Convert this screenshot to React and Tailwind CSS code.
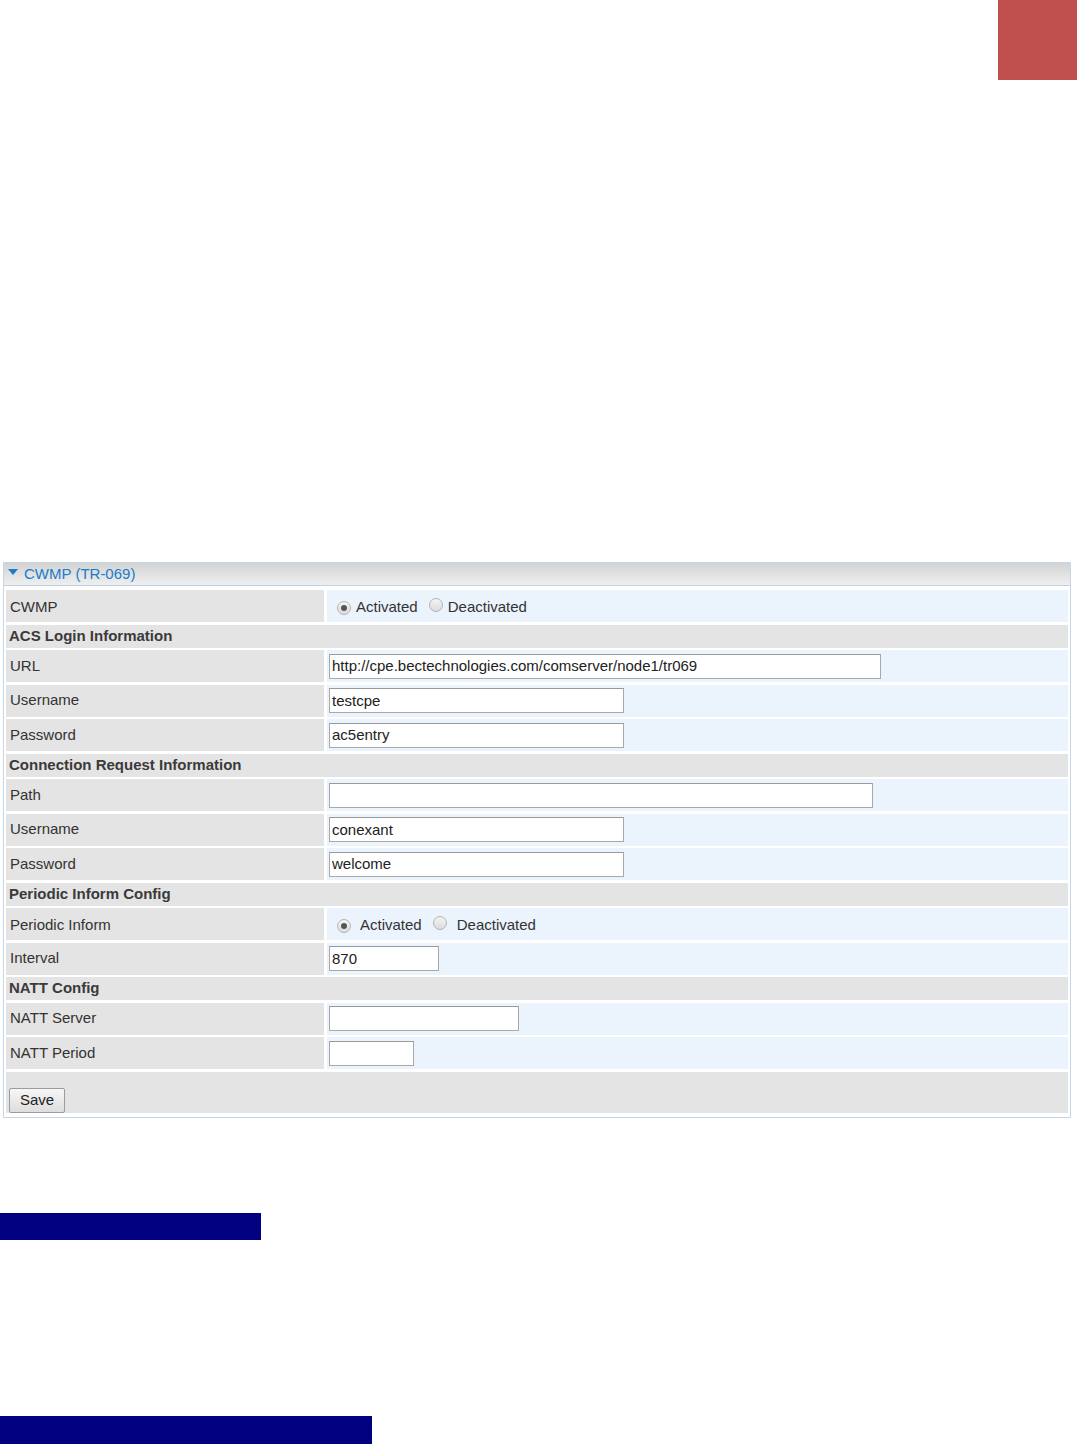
import React from "react";

const font = { fontFamily: '"Liberation Sans", Arial, sans-serif' };

function Radio({ checked }) {
  return (
    <span className="inline-flex items-center justify-center w-[14px] h-[14px] rounded-full border border-[#b4b4b4] bg-gradient-to-b from-[#f4f4f4] to-[#dcdcdc] shrink-0">
      {checked ? <span className="w-[6px] h-[6px] rounded-full bg-[#555]" /> : null}
    </span>
  );
}

function TextInput({ value, w }) {
  return (
    <div
      className={`h-[25px] bg-white border border-[#a9a9a9] border-t-[#9a9a9a] flex items-center pl-[2px] pt-[1px] text-[15px] text-[#222] ${w}`}
    >
      {value}
    </div>
  );
}

function DataRow({ label, children, top }) {
  return (
    <div className="flex h-[32px] gap-[3px]">
      <div className={`w-[318px] shrink-0 bg-[#e4e4e4] flex ${top ? "items-start pt-[6px]" : "items-center"} pl-[4px] text-[15px] text-[#333]`}>
        {label}
      </div>
      <div className="flex-1 bg-[#ebf3fd] flex items-center pl-[2px]">{children}</div>
    </div>
  );
}

function HeadRow({ children }) {
  return (
    <div className="h-[23px] bg-[#e4e4e4] flex items-center pl-[3px] text-[15px] font-bold text-[#3a3a3a]">
      {children}
    </div>
  );
}

function RadioPair({ wide }) {
  return (
    <div className="flex items-center pt-[3px] pl-[8px] text-[15px] text-[#333]">
      <Radio checked />
      <span className={wide ? "ml-[9px]" : "ml-[5px]"}>Activated</span>
      <span className="ml-[11px]">
        <Radio />
      </span>
      <span className={wide ? "ml-[10px]" : "ml-[5px]"}>Deactivated</span>
    </div>
  );
}

export default function App() {
  return (
    <div className="w-[1077px] h-[1445px] bg-white relative overflow-hidden" style={font}>
      <div className="flex justify-end">
        <div className="w-[79px] h-[80px] bg-[#c0504d]" />
      </div>

      <div className="mt-[482px] ml-[3px] w-[1068px] border border-[#c5d6e8]">
        <div className="h-[23px] bg-gradient-to-b from-[#d3d3d3] to-[#efefef] border-b border-[#bcd0e6] flex items-center pl-[4px] gap-[6px]">
          <svg width="10" height="7" viewBox="0 0 10 7" className="mb-[3px]">
            <polygon points="0,0 10,0 5,6" fill="#1b7ccb" />
          </svg>
          <span className="text-[15px] text-[#1b7ccb]">CWMP (TR-069)</span>
        </div>
        <div className="pt-[4px] px-[2px] pb-[4px] flex flex-col gap-[2.5px]">
          <DataRow label="CWMP" top>
            <RadioPair />
          </DataRow>
          <HeadRow>ACS Login Information</HeadRow>
          <DataRow label="URL">
            <TextInput w="w-[552px]" value="http://cpe.bectechnologies.com/comserver/node1/tr069" />
          </DataRow>
          <DataRow label="Username">
            <TextInput w="w-[295px]" value="testcpe" />
          </DataRow>
          <DataRow label="Password">
            <TextInput w="w-[295px]" value="ac5entry" />
          </DataRow>
          <HeadRow>Connection Request Information</HeadRow>
          <DataRow label="Path">
            <TextInput w="w-[544px]" value="" />
          </DataRow>
          <DataRow label="Username">
            <TextInput w="w-[295px]" value="conexant" />
          </DataRow>
          <DataRow label="Password">
            <TextInput w="w-[295px]" value="welcome" />
          </DataRow>
          <HeadRow>Periodic Inform Config</HeadRow>
          <DataRow label="Periodic Inform" top>
            <RadioPair wide />
          </DataRow>
          <DataRow label="Interval">
            <TextInput w="w-[110px]" value="870" />
          </DataRow>
          <HeadRow>NATT Config</HeadRow>
          <DataRow label="NATT Server">
            <TextInput w="w-[190px]" value="" />
          </DataRow>
          <DataRow label="NATT Period">
            <TextInput w="w-[85px]" value="" />
          </DataRow>
          <div className="h-[41px] bg-[#e4e4e4] flex items-end pl-[3px]">
            <button className="h-[25px] px-[10px] border border-[#9c9c9c] rounded-[2px] bg-gradient-to-b from-[#f6f6f6] to-[#dedede] text-[15px] text-[#222]">
              Save
            </button>
          </div>
        </div>
      </div>

      <div className="mt-[95px] w-[261px] h-[27px] bg-[#000080]" />
      <div className="mt-[176px] w-[372px] h-[28px] bg-[#000080]" />
    </div>
  );
}
